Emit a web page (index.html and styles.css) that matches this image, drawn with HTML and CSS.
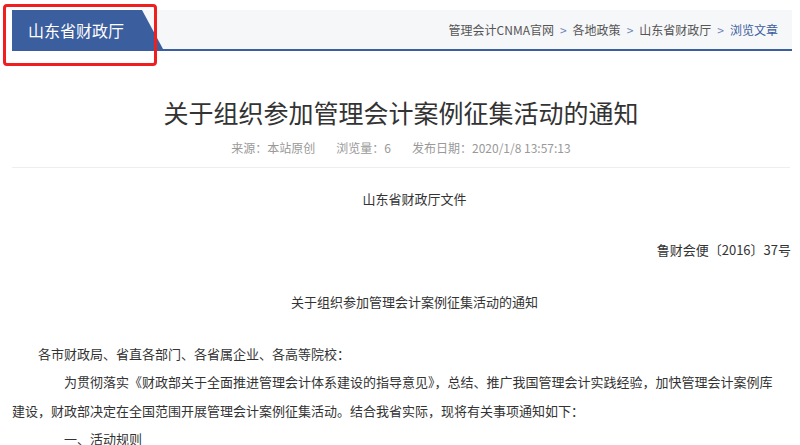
FILE: index.html
```html
<!DOCTYPE html>
<html lang="zh-CN">
<head>
<meta charset="UTF-8">
<meta name="viewport" content="width=device-width, initial-scale=1.0">
<title>关于组织参加管理会计案例征集活动的通知</title>
<link rel="stylesheet" href="styles.css">
</head>
<body>

<div class="page">
    <div class="top-bar">
        <div class="tab">山东省财政厅</div>
        <div class="crumbs">
            <a href="#">管理会计CNMA官网</a>
            <span class="sep">&gt;</span>
            <a href="#">各地政策</a>
            <span class="sep">&gt;</span>
            <a href="#">山东省财政厅</a>
            <span class="sep">&gt;</span>
            <a href="#" class="current">浏览文章</a>
        </div>
        <!-- red box drawn over the tab -->
        <div class="mark"></div>
    </div>

    <div class="article-head">
        <h1>关于组织参加管理会计案例征集活动的通知</h1>
        <div class="meta">
            <span>来源：本站原创</span>
            <span>浏览量：6</span>
            <span>发布日期：2020/1/8 13:57:13</span>
        </div>
    </div>

    <div class="article-body">
        <p class="center doc-name">山东省财政厅文件</p>
        <p class="right doc-no">鲁财会便〔2016〕37号</p>
        <p class="center doc-title">关于组织参加管理会计案例征集活动的通知</p>
        <p class="greet">各市财政局、省直各部门、各省属企业、各高等院校：</p>
        <p class="indent">为贯彻落实《财政部关于全面推进管理会计体系建设的指导意见》，总结、推广我国管理会计实践经验，加快管理会计案例库建设，财政部决定在全国范围开展管理会计案例征集活动。结合我省实际，现将有关事项通知如下：</p>
        <p class="indent">一、活动规则</p>
    </div>
</div>

</body>
</html>
```

FILE: styles.css
```css
body {
    margin: 0;
    background-color: #fff;
    font-family: "Noto Sans CJK SC", "Noto Sans", sans-serif;
    color: #333;
}

.page {
    padding: 10px 8px 0 12px;
}

.top-bar {
    position: relative;
    display: flex;
    align-items: center;
    height: 39px;
    background-color: #f6f7f9;
    border-bottom: 2px solid #3b5e9e;
}

.tab {
    align-self: stretch;
    width: 151px;
    box-sizing: border-box;
    padding-left: 16px;
    line-height: 40px;
    font-size: 16px;
    color: #fff;
    background-color: #3b5e9e;
    clip-path: polygon(0 0, 130px 0, 151px 100%, 0 100%);
}

.crumbs {
    margin-left: auto;
    padding-right: 14px;
    font-size: 12px;
    display: flex;
    gap: 6px;
}

.crumbs a {
    color: #555;
    text-decoration: none;
}

.crumbs .sep {
    color: #6b86b8;
}

.crumbs a.current {
    color: #3b5e9e;
}

.mark {
    position: absolute;
    left: -9px;
    top: -6px;
    width: 148px;
    height: 56px;
    border: 3px solid #f01e1e;
    border-radius: 4px;
}

.article-head {
    text-align: center;
    margin-top: 42px;
    padding-bottom: 9px;
    border-bottom: 1px solid #eee;
    margin-right: 2px;
}

.article-head h1 {
    margin: 0;
    font-size: 25px;
    font-weight: normal;
    line-height: 38px;
    color: #333;
}

.meta {
    margin-top: 7px;
    font-size: 12px;
    line-height: 20px;
    color: #999;
    display: flex;
    justify-content: center;
    gap: 21px;
}

.article-body {
    width: 779px;
    font-size: 13px;
    line-height: 28.5px;
}

.article-body p {
    margin: 0;
    text-indent: 2em;
}

.center {
    text-align: center;
}

.right {
    text-align: right;
}

.doc-name {
    margin-top: 17px !important;
}

.doc-no {
    margin-top: 22px !important;
}

.doc-title {
    margin-top: 24px !important;
}

.greet {
    margin-top: 23px !important;
}

.article-body p.indent {
    text-indent: 4em;
    margin-right: 12px;
}
```
